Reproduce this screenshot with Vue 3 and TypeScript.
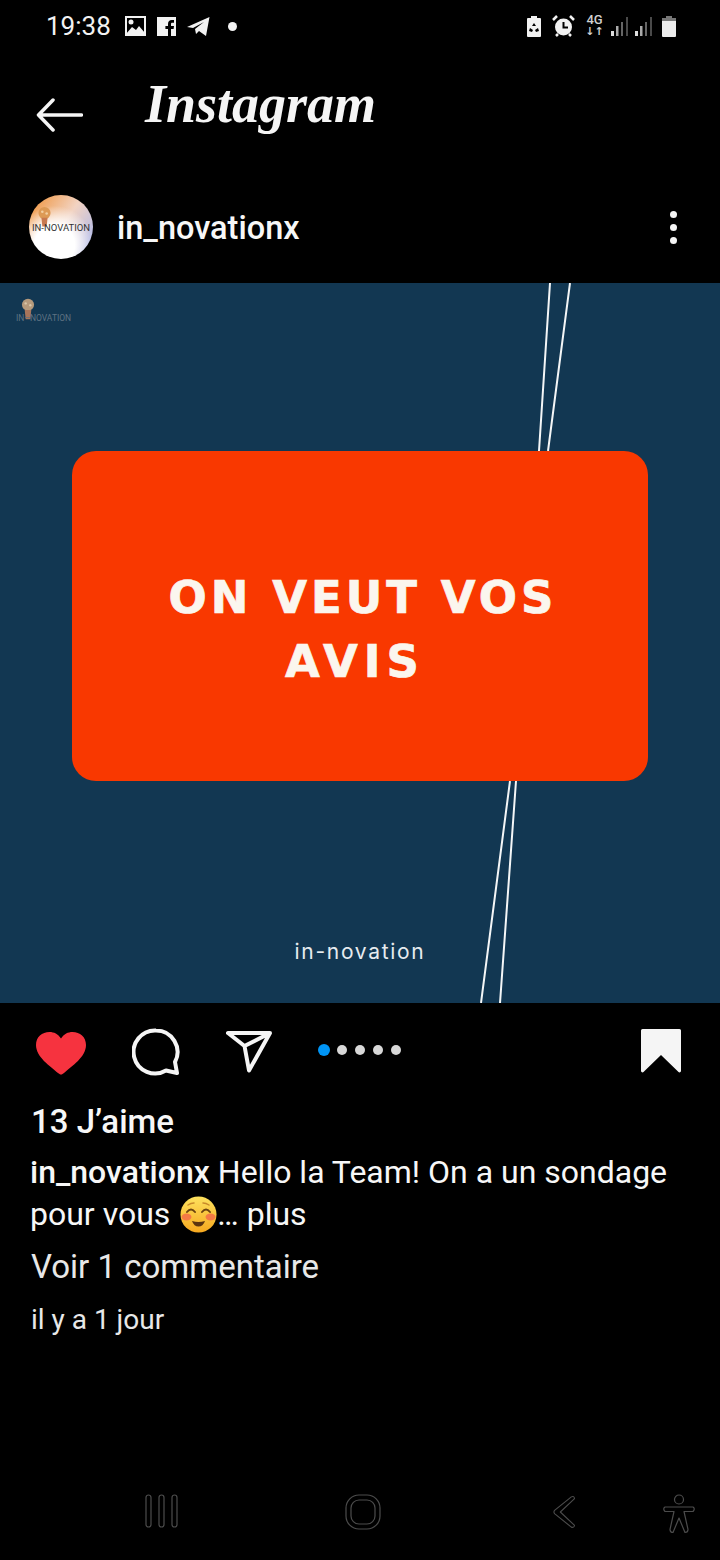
<script setup lang="ts">
const dots = [0, 1, 2, 3, 4];
const signals = [0, 1];
</script>

<template>
  <div class="phone">
    <div class="status">
      <span class="time">19:38</span>
      <div class="status-left">
        <svg width="21" height="20" viewBox="0 0 21 20"><path fill="#f2f2f2" fill-rule="evenodd" d="M0 0h21v20H0zM2 2v16h17V2z"/><path fill="#f2f2f2" d="M1 18l6-7 4 3 3-4 6 7v2H1z"/><circle cx="6" cy="6" r="2.500" fill="#f2f2f2"/></svg>
        <svg width="19" height="19" viewBox="0 0 19 19"><path fill="#f2f2f2" d="M0 0h19v19h-5v-7h2.600l.4-3h-3V7.200c0-.9.300-1.400 1.500-1.400H17V3.100c-.5-.1-1.300-.1-2.200-.1-2.300 0-3.800 1.400-3.800 3.900V9H8.400v3H11v7H0z"/></svg>
        <svg width="23" height="19" viewBox="0 0 23 19"><path fill="#f2f2f2" d="M0 10L22.500 0 19 19l-7-5-3 3-1-5 9-7-11 6z"/></svg>
        <i class="status-dot"></i>
      </div>
      <div class="status-right">
        <svg width="14" height="21" viewBox="0 0 14 21"><path fill="#f2f2f2" fill-rule="evenodd" d="M4 0h6v2h3a1 1 0 0 1 1 1v17a1 1 0 0 1-1 1H1a1 1 0 0 1-1-1V3a1 1 0 0 1 1-1h3zM7 7l-2 3h4zM3 12l-1 3 3 1 1-2zM11 12l-3 2 1 2 3-1z"/></svg>
        <svg width="23" height="22" viewBox="0 0 23 22"><circle cx="11.500" cy="12" r="8.500" fill="#f2f2f2"/><path d="M11.500 7v5.500H16" fill="none" stroke="#000" stroke-width="2"/><path d="M1 5l4-4M22 5l-4-4M4 21l2-2M19 21l-2-2" stroke="#f2f2f2" stroke-width="2.500"/></svg>
        <div class="net">
          <span>4G</span>
          <span class="net-arrows">↓↑</span>
        </div>
        <div class="signals">
          <svg v-for="s in signals" :key="s" width="18" height="19" viewBox="0 0 18 19"><path d="M0 14h3v5H0z" fill="#ddd"/><path d="M5 9h2.500v10H5z" fill="#aaa"/><path d="M10 5h2v14h-2z" fill="#666"/><path d="M15 0h2v19h-2z" fill="#4a4a4a"/></svg>
        </div>
        <svg width="14" height="21" viewBox="0 0 14 21"><path fill="#777" d="M4 0h6v2h4v4H0V2h4z"/><path fill="#ececec" d="M0 5h14v15a1 1 0 0 1-1 1H1a1 1 0 0 1-1-1z"/></svg>
      </div>
    </div>

    <div class="header">
      <svg class="back" width="47" height="34" viewBox="0 0 47 34"><path d="M45.500 17H3M17 2L2.500 17 17 32" fill="none" stroke="#f5f5f5" stroke-width="3.500" stroke-linecap="round" stroke-linejoin="round"/></svg>
      <span class="logo">Instagram</span>
    </div>

    <div class="author">
      <div class="avatar">
        <svg class="avatar-bulb" width="13" height="22" viewBox="0 0 15 24"><circle cx="7.500" cy="7.500" r="7" fill="#dd9a55"/><circle cx="5" cy="6" r="1.500" fill="#f3cfa0"/><circle cx="10" cy="8" r="1.500" fill="#f3cfa0"/><path d="M4 13h7l-1 10H5z" fill="#c8794f"/></svg>
        <span class="avatar-text">IN-NOVATION</span>
      </div>
      <span class="username">in_novationx</span>
      <div class="more"><i></i><i></i><i></i></div>
    </div>

    <div class="post">
      <svg class="post-lines" width="720" height="720" viewBox="0 0 720 720">
        <path d="M550 0L539 168M570 0L548 168M510 498L481 720M516 498L500 720" stroke="#f4f6f7" stroke-width="2" fill="none"/>
      </svg>
      <div class="watermark">
        <svg width="14" height="24" viewBox="0 0 15 24"><circle cx="7.500" cy="7.500" r="6.500" fill="#b59a7c"/><circle cx="5" cy="6" r="1.300" fill="#d9c6a8"/><circle cx="10" cy="8" r="1.300" fill="#d9c6a8"/><path d="M4 13h7l-1 10H5z" fill="#a8745a"/></svg>
        <span>IN–NOVATION</span>
      </div>
      <div class="card">
        <p>ON VEUT VOS<br /><span class="card-second">AVIS</span></p>
      </div>
      <div class="brand">in-novation</div>
    </div>

    <div class="actions">
      <svg class="act-heart" width="50" height="43" viewBox="0 0 50 43"><path fill="#f6333f" d="M25 42.500c-1 0-2-.6-3-1.500C14 34 0 25 0 13 0 5 6 0 13.500 0 18 0 22 2 25 6.500 28 2 32 0 36.500 0 44 0 50 5 50 13c0 12-14 21-22 28-1 .9-2 1.500-3 1.500z"/></svg>
      <svg class="act-comment" width="48" height="48" viewBox="0 0 48 48"><path fill="none" stroke="#f5f5f5" stroke-width="4" stroke-linejoin="round" d="M24 2.500a21.500 21.500 0 0 1 19 31.500l2 11-11-2.500A21.500 21.500 0 1 1 24 2.500z"/></svg>
      <svg class="act-send" width="46" height="42" viewBox="0 0 46 42"><path fill="none" stroke="#f5f5f5" stroke-width="4" stroke-linejoin="round" d="M2 2h42L23 39.500 18.500 15zM18.500 15L44 2"/></svg>
      <div class="dots">
        <i v-for="d in dots" :key="d" :class="{ on: d === 0 }"></i>
      </div>
      <svg class="bookmark" width="40" height="44" viewBox="0 0 40 44"><path fill="#f5f5f5" d="M1.500 0h37A1.500 1.500 0 0 1 40 1.500V42a1.500 1.500 0 0 1-2.500 1L20 26 2.500 43A1.500 1.500 0 0 1 0 42V1.500A1.500 1.500 0 0 1 1.500 0z"/></svg>
    </div>

    <div class="details">
      <div class="likes">13 J’aime</div>
      <div class="caption">
        <div class="caption-line"><b>in_novationx</b><span>Hello la Team! On a un sondage</span></div>
        <div class="caption-line">
          <span>pour vous</span>
          <svg class="emoji" width="37" height="37" viewBox="0 0 37 37">
            <defs>
              <linearGradient id="face" x1="0" y1="0" x2="0" y2="1">
                <stop offset="0" stop-color="#fde25e" />
                <stop offset="1" stop-color="#f6a81f" />
              </linearGradient>
            </defs>
            <circle cx="18.500" cy="18.500" r="18" fill="url(#face)" />
            <ellipse cx="6.500" cy="21" rx="5" ry="3.500" fill="#f47a45" />
            <ellipse cx="30.500" cy="21" rx="5" ry="3.500" fill="#f47a45" />
            <path d="M7 16q4-5 8 0M22 16q4-5 8 0" fill="none" stroke="#6b4310" stroke-width="2" stroke-linecap="round" />
            <path d="M8 9q3-2 6-2M23 7q3 0 6 2" fill="none" stroke="#c98a2a" stroke-width="1.500" stroke-linecap="round" />
            <path d="M12 25q6.500 2 13 0q-2 5.500-6.500 5.500T12 25z" fill="#5b3410" />
          </svg>
          <span>… plus</span>
        </div>
      </div>
      <div class="comments">Voir 1 commentaire</div>
      <div class="ago">il y a 1 jour</div>
    </div>

    <div class="nav">
      <svg width="34" height="34" viewBox="0 0 34 34"><g fill="none" stroke="#4c4c4c" stroke-width="1.200"><rect x="1" y="1" width="5" height="32" rx="2.500"/><rect x="14" y="1" width="5" height="32" rx="2.500"/><rect x="27" y="1" width="5" height="32" rx="2.500"/></g></svg>
      <svg class="nav-home" width="36" height="36" viewBox="0 0 36 36"><g fill="none" stroke="#4c4c4c" stroke-width="1.200"><rect x="1" y="1" width="34" height="34" rx="13"/><rect x="6" y="6" width="24" height="24" rx="8"/></g></svg>
      <svg class="nav-back" width="22" height="36" viewBox="0 0 24 36"><path fill="none" stroke="#4c4c4c" stroke-width="1.200" stroke-linejoin="round" d="M20 1.500q3-1.500 3.500 2L8 18l15.500 14.500q-.5 3-3.500 2L2 20q-2-2 0-4z"/></svg>
      <svg class="nav-person" width="34" height="40" viewBox="0 0 34 40"><g fill="none" stroke="#4c4c4c" stroke-width="1.200" stroke-linejoin="round"><circle cx="17" cy="5.500" r="4.500"/><path d="M3 13h28q2.500 1.500 0 4.500H22l4 18q0 3-3 3L17 24l-6 14.500q-3 0-3-3l4-18H3q-2.500-3 0-4.500z"/></g></svg>
    </div>
  </div>
</template>

<style scoped>
.phone {
  width: 720px;
  height: 1560px;
  overflow: hidden;
  background: #000;
  color: #f7f7f7;
  font-family: Roboto, "Liberation Sans", sans-serif;
  display: flex;
  flex-direction: column;
}

.status {
  height: 52px;
  display: flex;
  align-items: center;
  padding: 0 44px 0 46px;
}

.time {
  font-size: 26px;
  color: #f2f2f2;
}

.status-left {
  display: flex;
  align-items: center;
  gap: 11px;
  margin-left: 14px;
}

.status-dot {
  width: 9px;
  height: 9px;
  border-radius: 50%;
  background: #f2f2f2;
  margin-left: 7px;
}

.status-right {
  margin-left: auto;
  display: flex;
  align-items: center;
  gap: 11px;
}

.net {
  display: flex;
  flex-direction: column;
  align-items: center;
  width: 17px;
  font-size: 13px;
  line-height: 12px;
  font-weight: 500;
  color: #cfcfcf;
}

.net-arrows {
  font-family: "DejaVu Sans", sans-serif;
  font-size: 11px;
  font-weight: 700;
}

.signals {
  display: flex;
  gap: 6px;
  margin-left: -3px;
  margin-right: -2px;
}

.header {
  height: 123px;
  display: flex;
  align-items: center;
  padding-left: 36px;
}

.back {
  margin-top: 3px;
}

.logo {
  margin-left: 62px;
  margin-top: -20px;
  font-family: "Liberation Serif", serif;
  font-style: italic;
  font-weight: 700;
  font-size: 54px;
  line-height: 70px;
  color: #f5f5f5;
}

.author {
  height: 64px;
  margin-top: 20px;
  margin-bottom: 24px;
  display: flex;
  align-items: center;
  padding: 0 43px 0 29px;
}

.avatar {
  width: 64px;
  height: 64px;
  border-radius: 50%;
  position: relative;
  overflow: hidden;
  background: radial-gradient(circle at 40% 78%, #fff 32%, transparent 62%),
    linear-gradient(125deg, #f0a35c 15%, #f2d3c2 50%, #aeb8ea 90%);
}

.avatar-bulb {
  position: absolute;
  left: 9px;
  top: 11px;
}

.avatar-text {
  position: absolute;
  left: 3px;
  top: 28px;
  font-size: 9.500px;
  letter-spacing: 0;
  line-height: 10px;
  color: #333;
  white-space: nowrap;
}

.username {
  margin-left: 24px;
  margin-top: 2px;
  font-size: 32.500px;
  font-weight: 500;
}

.more {
  margin-left: auto;
  display: flex;
  flex-direction: column;
  gap: 6px;
}

.more i {
  width: 7px;
  height: 7px;
  border-radius: 50%;
  background: #f5f5f5;
}

.post {
  position: relative;
  width: 720px;
  height: 720px;
  flex-shrink: 0;
  background: #123752;
  display: flex;
  flex-direction: column;
  align-items: center;
  padding-top: 168px;
  box-sizing: border-box;
}

.post-lines {
  position: absolute;
  left: 0;
  top: 0;
}

.watermark {
  position: absolute;
  left: 16px;
  top: 14px;
  display: flex;
  flex-direction: column;
  align-items: flex-start;
  font-size: 8.500px;
  line-height: 10px;
  color: #5e7282;
}

.watermark svg {
  margin-left: 5px;
}

.watermark span {
  margin-top: -8px;
  white-space: nowrap;
}

.card {
  position: relative;
  width: 576px;
  height: 330px;
  border-radius: 24px;
  background: #f93800;
  display: flex;
  align-items: center;
  justify-content: center;
  box-sizing: border-box;
  padding: 28px 0 0 6px;
}

.card p {
  margin: 0;
  text-align: center;
  font-family: "DejaVu Sans", sans-serif;
  font-weight: 700;
  font-size: 45px;
  line-height: 64px;
  letter-spacing: 4px;
  -webkit-text-stroke: 0.7px #fbf6ee;
  color: #fbf6ee;
}

.card-second {
  display: inline-block;
  margin-right: 16px;
  letter-spacing: 6px;
}

.brand {
  margin-top: 158px;
  position: relative;
  font-family: Inter, "Open Sans", sans-serif;
  font-size: 21px;
  line-height: 26px;
  letter-spacing: 1.700px;
  color: #e6ebef;
}

.actions {
  height: 94px;
  flex-shrink: 0;
  display: flex;
  align-items: center;
  gap: 46px;
  padding: 0 39px 0 36px;
}

.act-heart {
  margin-top: 6px;
}

.act-comment,
.act-send {
  margin-top: 4px;
}

.dots {
  display: flex;
  align-items: center;
  gap: 8px;
}

.dots i {
  width: 10px;
  height: 10px;
  border-radius: 50%;
  background: #d8d8d8;
}

.dots i.on {
  width: 12px;
  height: 12px;
  margin-right: -1px;
  background: #0095f6;
}

.bookmark {
  margin-left: auto;
  margin-top: 2px;
}

.details {
  padding: 0 31px;
  font-size: 32px;
}

.likes {
  font-size: 33px;
  font-weight: 500;
  line-height: 42px;
  margin-top: 4px;
}

.caption {
  margin: 8px 0 0 -1px;
  line-height: 42px;
}

.caption-line {
  display: flex;
  align-items: center;
  white-space: nowrap;
}

.caption-line b {
  font-weight: 500;
  margin-right: 8px;
}

.emoji {
  margin: 0 0 0 10px;
}

.comments {
  margin-top: 11px;
  font-size: 33px;
  line-height: 42px;
  color: #e8e8e8;
}

.ago {
  margin-top: 11px;
  font-size: 28px;
  line-height: 42px;
  color: #e8e8e8;
}

.nav {
  margin-top: auto;
  margin-bottom: 26px;
  display: flex;
  align-items: flex-start;
  padding-left: 145px;
}

.nav-home {
  margin-left: 166px;
}

.nav-back {
  margin-left: 172px;
}

.nav-person {
  margin-left: 87px;
}
</style>
